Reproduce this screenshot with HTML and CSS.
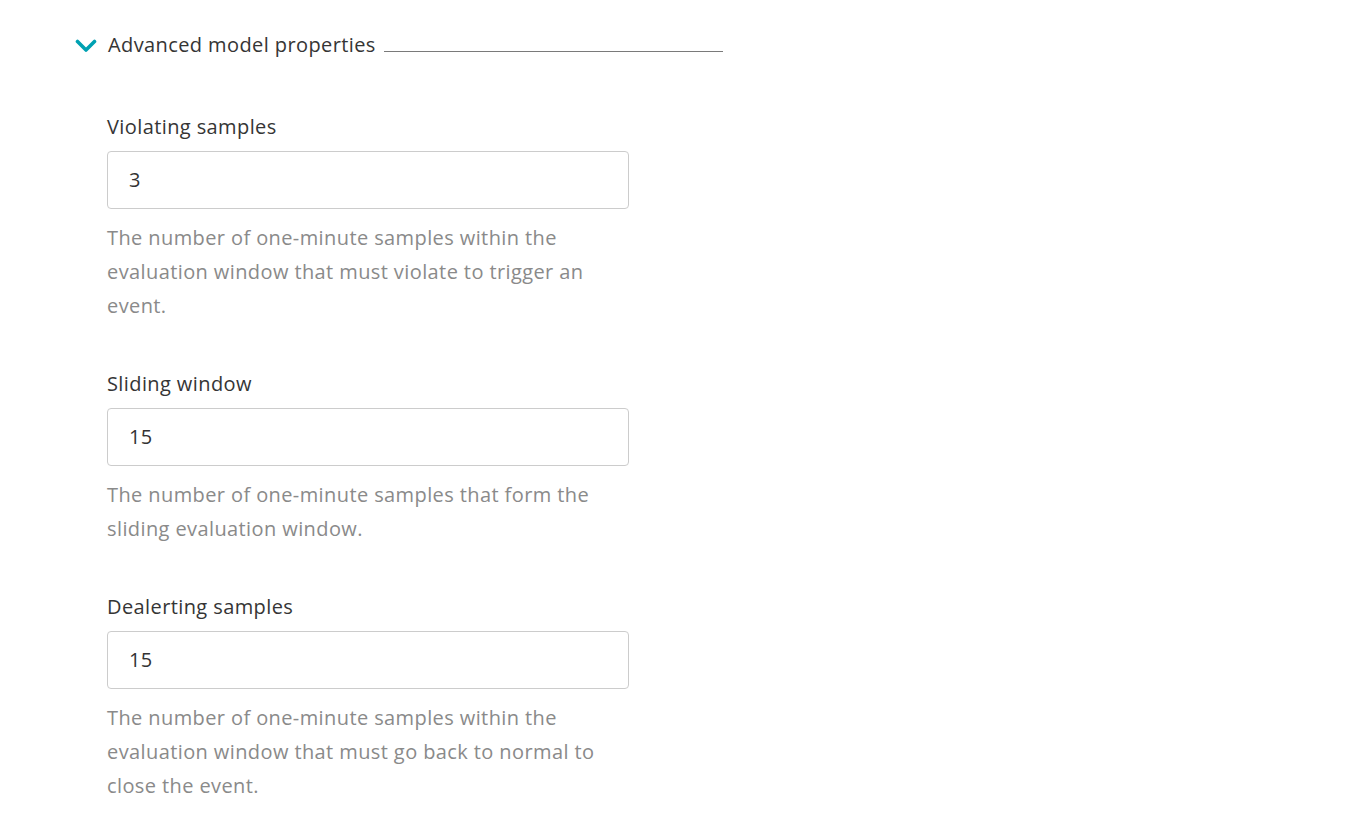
FILE: index.html
```html
<!DOCTYPE html>
<html>
<head>
<meta charset="utf-8">
<link rel="stylesheet" href="styles.css">
</head>
<body>
<div class="page">
  <div class="section-head">
    <svg class="chevron" width="22" height="14" viewBox="0 0 22 14"><path d="M2.5 2.5 L11 11 L19.5 2.5" fill="none" stroke="#00a1b2" stroke-width="3.6" stroke-linecap="round" stroke-linejoin="round"/></svg>
    <span class="section-title">Advanced model properties</span>
    <span class="section-rule"></span>
  </div>
  <div class="fields">
    <div class="field">
      <div class="label">Violating samples</div>
      <div class="input">3</div>
      <div class="desc">The number of one-minute samples within the evaluation window that must violate to trigger an event.</div>
    </div>
    <div class="field">
      <div class="label">Sliding window</div>
      <div class="input">15</div>
      <div class="desc">The number of one-minute samples that form the sliding evaluation window.</div>
    </div>
    <div class="field">
      <div class="label">Dealerting samples</div>
      <div class="input">15</div>
      <div class="desc">The number of one-minute samples within the evaluation window that must go back to normal to close the event.</div>
    </div>
  </div>
</div>
</body>
</html>
```
FILE: styles.css
```css
html, body { margin: 0; padding: 0; background: #fff; }
body { font-family: "Open Sans", "Liberation Sans", sans-serif; color: #353535; letter-spacing: 0.4px; }
.page { padding: 32px 0 0 75px; }
.section-head { display: flex; align-items: center; height: 26px; width: 648px; }
.chevron { display: block; margin-right: 11px; margin-top: 1px; }
.section-title { font-size: 20px; line-height: 26px; white-space: nowrap; }
.section-rule { flex: 1; height: 1px; background: #7a7a7a; margin-left: 8px; margin-top: 12px; }
.fields { padding-left: 32px; margin-top: 57px; display: flex; flex-direction: column; gap: 49px; }
.field { width: 522px; }
.label { font-size: 20px; line-height: 24px; }
.input { margin-top: 12px; box-sizing: border-box; height: 58px; border: 1px solid #cccccc; border-radius: 4px; padding: 0 21px; font-size: 20px; line-height: 56px; color: #333; }
.desc { margin-top: 12px; font-size: 20px; line-height: 34px; color: #8a8a8a; padding-right: 20px; }
```
